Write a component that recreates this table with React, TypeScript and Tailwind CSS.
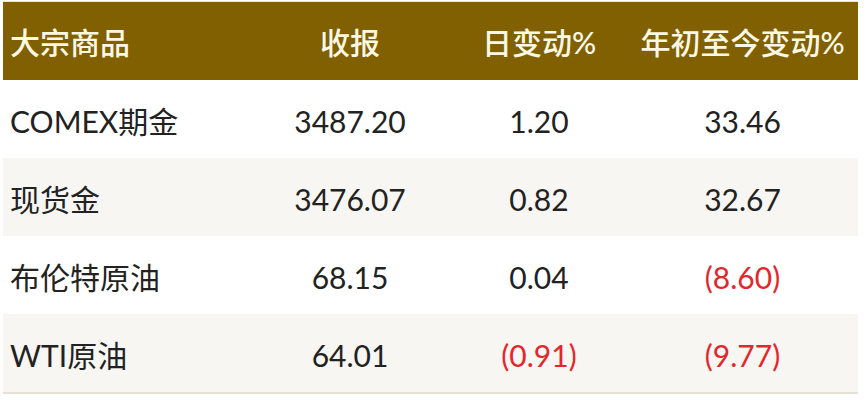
import React from 'react';

type Row = {
  name: string;
  close: string;
  day: string;
  ytd: string;
};

const rows: Row[] = [
  { name: 'COMEX期金', close: '3487.20', day: '1.20', ytd: '33.46' },
  { name: '现货金', close: '3476.07', day: '0.82', ytd: '32.67' },
  { name: '布伦特原油', close: '68.15', day: '0.04', ytd: '(8.60)' },
  { name: 'WTI原油', close: '64.01', day: '(0.91)', ytd: '(9.77)' },
];

const numCls = (v: string) => (v.startsWith('(') ? 'text-[#e3262c]' : 'text-[#222]');

export default function App() {
  return (
    <div className="w-[864px] h-[400px] bg-white pt-[1px] pl-[3px] font-['Lato','Noto_Sans_CJK_SC',sans-serif]">
      <div className="w-[855px] border-t border-[#f3e6b0]">
        <div className="grid grid-cols-[246px_202px_176px_231px] h-[78px] items-center bg-[#806000] text-[#fdf8e6] text-[30px] font-medium">
          <div className="pl-[7px] pt-[2px]">大宗商品</div>
          <div className="text-center pt-[2px]">收报</div>
          <div className="text-center pt-[2px]">日变动%</div>
          <div className="text-center pt-[2px]">年初至今变动%</div>
        </div>
        {rows.map((r, i) => (
          <div
            key={r.name}
            className={`grid grid-cols-[246px_202px_176px_231px] h-[78px] items-center text-[30px] pt-[5px] ${
              i % 2 === 1 ? 'bg-[#f7f6f2]' : 'bg-white'
            }`}
          >
            <div className="pl-[7px] text-[#222]">{r.name}</div>
            <div className="text-center text-[#222]">{r.close}</div>
            <div className={`text-center ${numCls(r.day)}`}>{r.day}</div>
            <div className={`text-center ${numCls(r.ytd)}`}>{r.ytd}</div>
          </div>
        ))}
        <div className="h-[2px] bg-[#e6e1d6]" />
      </div>
    </div>
  );
}
